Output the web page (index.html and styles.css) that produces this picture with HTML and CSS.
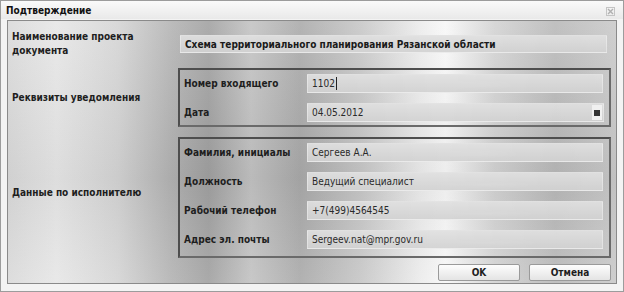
FILE: index.html
```html
<!DOCTYPE html>
<html lang="ru">
<head>
  <meta charset="UTF-8">
  <title>Подтверждение</title>
  <link rel="stylesheet" href="styles.css">
</head>
<body>
  <div class="window">
    <div class="titlebar">
      <span class="title">Подтверждение</span>
      <svg class="close" width="9" height="9" viewBox="0 0 9 9">
        <rect x="0.5" y="0.5" width="8" height="8" fill="none" stroke="#c4c4c4"/>
        <path d="M2 2 L7 7 M7 2 L2 7" stroke="#b0b0b0" stroke-width="1.4"/>
      </svg>
    </div>

    <div class="content">
      <!-- Наименование -->
      <div class="row first">
        <div class="side-label">Наименование проекта документа</div>
        <div class="field wide bold">Схема территориального планирования Рязанской области</div>
      </div>

      <!-- Реквизиты -->
      <div class="row">
        <div class="side-label">Реквизиты уведомления</div>
        <div class="group">
          <div class="line">
            <span class="label">Номер входящего</span>
            <div class="field">1102<span class="caret"></span></div>
          </div>
          <div class="line">
            <span class="label">Дата</span>
            <div class="field date">04.05.2012<span class="cal"><span></span></span></div>
          </div>
        </div>
      </div>

      <!-- Исполнитель -->
      <div class="row">
        <div class="side-label">Данные по исполнителю</div>
        <div class="group tall">
          <div class="line">
            <span class="label">Фамилия, инициалы</span>
            <div class="field">Сергеев А.А.</div>
          </div>
          <div class="line">
            <span class="label">Должность</span>
            <div class="field">Ведущий специалист</div>
          </div>
          <div class="line">
            <span class="label">Рабочий телефон</span>
            <div class="field">+7(499)4564545</div>
          </div>
          <div class="line">
            <span class="label">Адрес эл. почты</span>
            <div class="field">Sergeev.nat@mpr.gov.ru</div>
          </div>
        </div>
      </div>

      <div class="buttons">
        <button class="btn">OK</button>
        <button class="btn">Отмена</button>
      </div>
    </div>
  </div>
</body>
</html>
```

FILE: styles.css
```css
body {
  margin: 0;
  font-family: "DejaVu Sans Condensed", "DejaVu Sans", sans-serif;
  font-size: 10px;
  color: #1e1e1e;
  background: #fff;
}
.window {
  width: 624px;
  height: 292px;
  box-sizing: border-box;
  border: 1px solid #9c9c9c;
  background: #f3f3f3;
  display: flex;
  flex-direction: column;
}
.titlebar {
  height: 18px;
  display: flex;
  align-items: center;
  justify-content: space-between;
  padding: 0 8px 0 5px;
  background: linear-gradient(#fafafa, #e9e9e9);
}
.title {
  font-weight: bold;
  font-size: 10px;
  color: #111;
}
.close {
  margin-top: 2px;
}
.content {
  margin: 1px 6px 7px 6px;
  height: 264px;
  box-sizing: border-box;
  border: 1px solid #8a8a8a;
  padding: 0 5px 0 4px;
  display: flex;
  flex-direction: column;
  background:
    radial-gradient(ellipse 40px 5px at 470px 64px, rgba(255,255,255,0.8), rgba(255,255,255,0)),
    radial-gradient(ellipse 40px 5px at 470px 133px, rgba(255,255,255,0.8), rgba(255,255,255,0)),
    radial-gradient(ellipse 50px 4px at 480px 164px, rgba(255,255,255,0.7), rgba(255,255,255,0)),
    radial-gradient(ellipse 50px 4px at 480px 193px, rgba(255,255,255,0.7), rgba(255,255,255,0)),
    radial-gradient(ellipse 50px 4px at 480px 222px, rgba(255,255,255,0.7), rgba(255,255,255,0)),
    linear-gradient(180deg, rgba(255,255,255,0.12), rgba(0,0,0,0.04) 60%, rgba(255,255,255,0.1)),
    linear-gradient(90deg, #d9d9d9 0%, #e6e6e6 8%, #d4d4d4 18%, #b2b2b2 27%, #a0a0a0 33%, #c2c2c2 40%, #a9a9a9 48%, #c6c6c6 58%, #ececec 68%, #f7f7f7 72%, #d2d2d2 80%, #b8b8b8 90%, #c9c9c9 100%);
}
.row {
  display: flex;
  align-items: center;
}
.row.first {
  margin-top: 9px;
  margin-bottom: 10px;
}
.side-label {
  width: 166px;
  font-weight: bold;
  font-size: 10px;
  line-height: 14px;
  padding-right: 6px;
  box-sizing: border-box;
}
.field {
  flex: 1;
  height: 19px;
  line-height: 18px;
  padding: 0 4px;
  box-sizing: border-box;
  background: linear-gradient(rgba(224,224,224,0.92), rgba(210,210,210,0.92));
  border: 1px solid rgba(255,255,255,0.35);
  color: #2a2a2a;
  position: relative;
  white-space: nowrap;
}
.field.wide {
  height: 18px;
  line-height: 17px;
  margin-left: 2px;
  margin-right: 4px;
}
.field.bold {
  font-weight: bold;
  font-size: 10px;
  color: #1a1a1a;
}
.group {
  flex: 1;
  border: 2px solid #4e4e4e;
  border-right-color: #6a6a6a;
  border-bottom-color: #6a6a6a;
  padding: 4px 6px 3px 4px;
  display: flex;
  flex-direction: column;
  gap: 10px;
}
.group.tall {
  margin-top: 10px;
  padding-bottom: 7px;
}
.line {
  display: flex;
  align-items: center;
}
.label {
  width: 123px;
  font-weight: bold;
  font-size: 10px;
}
.caret {
  display: inline-block;
  width: 1px;
  height: 13px;
  background: #222;
  vertical-align: -3px;
  margin-left: 1px;
}
.field.date {
  margin-right: -1px;
}
.cal {
  position: absolute;
  right: 1px;
  top: 1px;
  width: 10px;
  height: 15px;
  background: #f0f0f0;
  display: flex;
  align-items: center;
  justify-content: center;
}
.cal span {
  width: 6px;
  height: 6px;
  background: #333;
}
.buttons {
  display: flex;
  justify-content: flex-end;
  gap: 9px;
  margin-top: 6px;
}
.btn {
  width: 82px;
  height: 17px;
  padding: 0;
  font-family: inherit;
  font-size: 10px;
  font-weight: bold;
  color: #1e1e1e;
  border: 1px solid #9a9a9a;
  border-radius: 2px;
  background: linear-gradient(#fdfdfd, #e4e4e4);
}
```
